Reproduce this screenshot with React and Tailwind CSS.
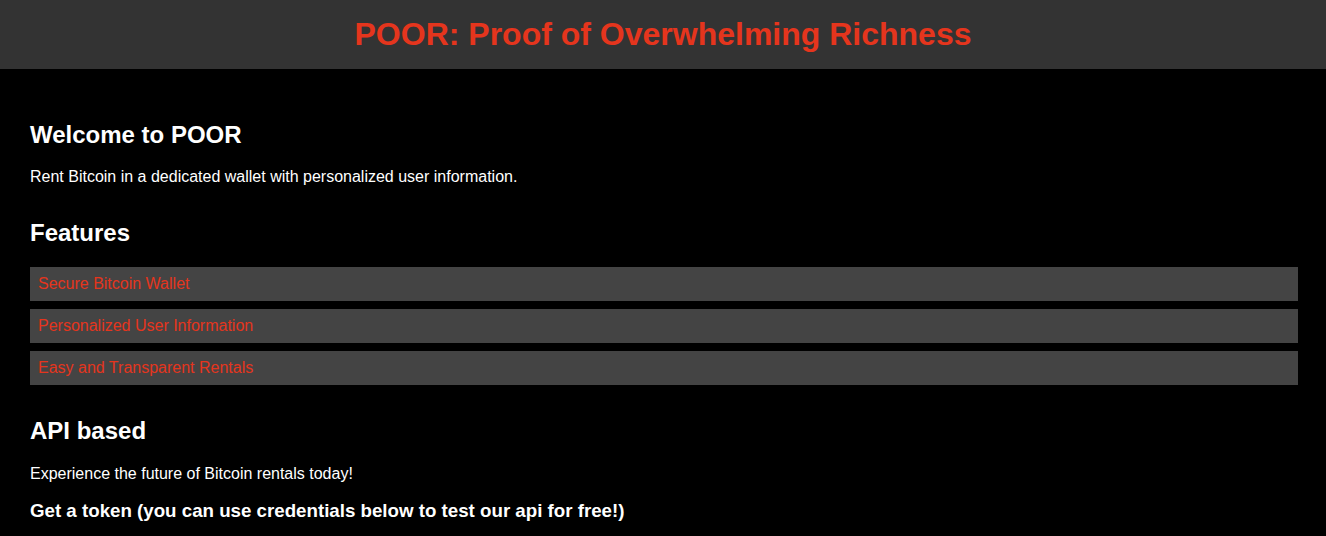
import React from "react";

const features = [
  "Secure Bitcoin Wallet",
  "Personalized User Information",
  "Easy and Transparent Rentals",
];

const App = () => {
  return (
    <div className="min-h-screen bg-black text-white font-['Liberation_Sans',Arial,sans-serif]">
      <header className="bg-[#333333] py-4 text-center">
        <h1 className="text-[32px] leading-[36.8px] font-bold text-[#e5351d]">
          POOR: Proof of Overwhelming Richness
        </h1>
      </header>

      <main className="pl-[30px] pr-[28px] pt-[52px] pb-8">
        <section>
          <h2 className="text-[24px] leading-[27.6px] font-bold">
            Welcome to POOR
          </h2>
          <p className="mt-5 text-base leading-[18.4px]">
            Rent Bitcoin in a dedicated wallet with personalized user
            information.
          </p>
        </section>

        <section className="mt-8">
          <h2 className="text-[24px] leading-[27.6px] font-bold">Features</h2>
          <ul className="mt-[21px] flex flex-col gap-2">
            {features.map((item) => (
              <li
                key={item}
                className="bg-[#444444] px-2 py-2 text-base leading-[18px] text-[#e5351d]"
              >
                {item}
              </li>
            ))}
          </ul>
        </section>

        <section className="mt-8">
          <h2 className="text-[24px] leading-[27.6px] font-bold">API based</h2>
          <p className="mt-5 text-base leading-[18.4px]">
            Experience the future of Bitcoin rentals today!
          </p>
          <h3 className="mt-[17px] text-[18.72px] leading-[21.5px] font-bold">
            Get a token (you can use credentials below to test our api for
            free!)
          </h3>
        </section>
      </main>
    </div>
  );
};

export default App;
